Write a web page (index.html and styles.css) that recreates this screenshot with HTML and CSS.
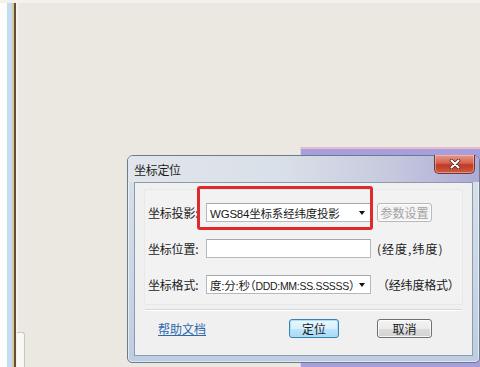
FILE: index.html
```html
<!DOCTYPE html>
<html>
<head>
<meta charset="utf-8">
<link rel="stylesheet" href="styles.css">
</head>
<body>
<div class="desktop">
  <div class="leftbar"></div>
  <div class="tabstub"></div>
  <div class="bgwin"></div>
  <div class="dialog">
    <div class="titlebar">
      <span class="title">坐标定位</span>
      <div class="close">
        <svg width="12" height="10" viewBox="0 0 12 10">
          <path d="M2.5 1.5 L9.5 8.5 M9.5 1.5 L2.5 8.5" stroke="#4a2a24" stroke-width="3.6" stroke-linecap="round"/>
          <path d="M2.5 1.5 L9.5 8.5 M9.5 1.5 L2.5 8.5" stroke="#ffffff" stroke-width="2" stroke-linecap="round"/>
        </svg>
      </div>
    </div>
    <div class="client">
      <div class="panel">
        <div class="row">
          <span class="label">坐标投影:</span>
          <div class="combo"><span class="val">WGS84坐标系经纬度投影</span><span class="arrow"></span></div>
          <span class="btn disabled small">参数设置</span>
        </div>
        <div class="row">
          <span class="label">坐标位置:</span>
          <div class="textbox"></div>
          <span class="suffix paren">(经度,纬度)</span>
        </div>
        <div class="row">
          <span class="label">坐标格式:</span>
          <div class="combo"><span class="val">度:分:秒（<span class="lat">DDD:MM:SS.SSSSS</span>）</span><span class="arrow"></span></div>
          <span class="suffix">（经纬度格式）</span>
        </div>
      </div>
      <div class="sep"></div>
      <div class="footer">
        <span class="link">帮助文档</span>
        <span class="btn primary">定位</span>
        <span class="gap"></span>
        <span class="btn">取消</span>
      </div>
    </div>
  </div>
  <div class="highlight"></div>
</div>
</body>
</html>
```

FILE: styles.css
```css
* { box-sizing: border-box; }
html, body { margin: 0; padding: 0; }
body {
  width: 480px;
  height: 367px;
  overflow: hidden;
  font-family: "Noto Sans CJK SC", "Liberation Sans", sans-serif;
  font-size: 12px;
  color: #1a1a1a;
}
.desktop {
  position: relative;
  width: 480px;
  height: 367px;
  background: #ebe8e1;
  border-top: 3px solid #f3f1ec;
  overflow: hidden;
}
.leftbar {
  position: absolute;
  left: 0; top: -3px; bottom: 0;
  width: 18px;
  background: linear-gradient(to right,
    #fdfdfd 0, #fdfdfd 7px,
    #c4dcf2 7px, #c4dcf2 12px,
    #d9c79a 12px, #d9c79a 14px,
    #5e4f36 14px, #5e4f36 16px,
    #f4f2ec 16px, #f4f2ec 18px);
}
.tabstub {
  position: absolute;
  left: 17px; top: 329px;
  width: 8px; height: 40px;
  background: #f9f8f5;
  border: 1px solid #c9c7c1;
  border-bottom: none;
  border-left: none;
  border-radius: 0 3px 0 0;
}
.bgwin {
  position: absolute;
  left: 300px; top: 144px; right: 0; bottom: 0;
  background: #a79fdd;
  border-top: 2px solid #e6bccb;
  border-left: 1px solid #d9d3ee;
}
.dialog {
  position: absolute;
  left: 127px; top: 152px;
  width: 353px; height: 208px;
  display: flex;
  flex-direction: column;
  padding: 0 6px 6px 6px;
  border: 1px solid #6d7a8a;
  border-radius: 6px 6px 5px 5px;
  background: linear-gradient(to bottom, #d9e1ea 0, #c9d6e6 60%, #bdcde2 100%);
  box-shadow: inset 0 0 0 1px rgba(255,255,255,0.55);
}
.titlebar {
  position: relative;
  height: 26px;
  margin: 0 -6px;
  padding-left: 6px;
  display: flex;
  align-items: center;
  border-radius: 5px 5px 0 0;
  background: linear-gradient(to right, #e1e6ec 0%, #d9dfe8 45%, #c6c9de 75%, #adaad6 100%);
}
.title {
  font-size: 12px;
  color: #1c1c1c;
  letter-spacing: -0.3px;
  margin-top: 1px;
}
.close {
  position: absolute;
  right: 4px; top: -1px;
  width: 41px; height: 19px;
  border: 1px solid #6b3a36;
  border-top: none;
  border-radius: 0 0 5px 5px;
  background: linear-gradient(to bottom, #e59a8a 0%, #d6624d 45%, #bf3a25 55%, #d05a43 100%);
  display: flex;
  align-items: center;
  justify-content: center;
  box-shadow: inset 0 0 0 1px rgba(255,220,210,0.45);
}
.client {
  flex: 1;
  display: flex;
  flex-direction: column;
  background: #f0f0f0;
  border: 1px solid #8d9aab;
}
.panel {
  margin: 6px 9px 0 9px;
  padding: 13px 0 10px 3px;
  border: 1px solid #e8e8e8;
  border-radius: 2px;
  background: #f2f2f2;
  display: grid;
  row-gap: 17px;
}
.row {
  display: grid;
  grid-template-columns: 52px 165px auto;
  column-gap: 6px;
  align-items: center;
  height: 19px;
}
.label {
  white-space: nowrap;
  letter-spacing: -0.2px;
}
.combo, .textbox {
  height: 19px;
  background: #ffffff;
  border: 1px solid #b4b9c1;
  border-top-color: #a3a8b0;
}
.combo {
  display: flex;
  align-items: center;
  justify-content: space-between;
  padding: 0 5px 0 3px;
  font-family: "Liberation Sans", "Noto Sans CJK SC", sans-serif;
  font-size: 11.5px;
  white-space: nowrap;
  overflow: hidden;
  letter-spacing: -0.2px;
  font-feature-settings: "halt";
}
.val { overflow: hidden; }
.lat {
  font-size: 10.5px;
  letter-spacing: -0.3px;
}
.arrow {
  width: 0; height: 0;
  border-left: 3.5px solid transparent;
  border-right: 3.5px solid transparent;
  border-top: 4px solid #111;
  flex: none;
}
.suffix {
  white-space: nowrap;
  letter-spacing: -0.2px;
}
.suffix.paren { letter-spacing: 1px; }
.btn {
  display: flex;
  align-items: center;
  justify-content: center;
  height: 19px;
  border: 1px solid #707070;
  border-radius: 3px;
  background: linear-gradient(to bottom, #f3f3f3 0%, #ebebeb 50%, #dcdcdc 51%, #d2d2d2 100%);
  box-shadow: inset 0 0 0 1px rgba(255,255,255,0.8);
  white-space: nowrap;
}
.btn.small { width: 55px; }
.btn.disabled {
  color: #a3a3a3;
  border-color: #b5b9bd;
  background: #f4f4f4;
}
.btn.primary {
  border-color: #3c7fb1;
  background: linear-gradient(to bottom, #eaf6fd 0%, #d9f0fc 50%, #bee6fd 51%, #a7d9f5 100%);
  box-shadow: inset 0 0 0 1px #a8e1f7;
}
.sep {
  margin: 4px 10px 0 10px;
  height: 2px;
  border-top: 1px solid #d7d7d7;
  border-bottom: 1px solid #ffffff;
}
.footer {
  display: grid;
  grid-template-columns: 131px 50px 38px 55px;
  align-items: center;
  padding: 8px 0 0 23px;
}
.link {
  color: #2b68ad;
  text-decoration: underline;
  white-space: nowrap;
}
.highlight {
  position: absolute;
  left: 197px; top: 183px;
  width: 176px; height: 44px;
  border: 3px solid #dd2a2c;
  border-radius: 3px;
}
```
